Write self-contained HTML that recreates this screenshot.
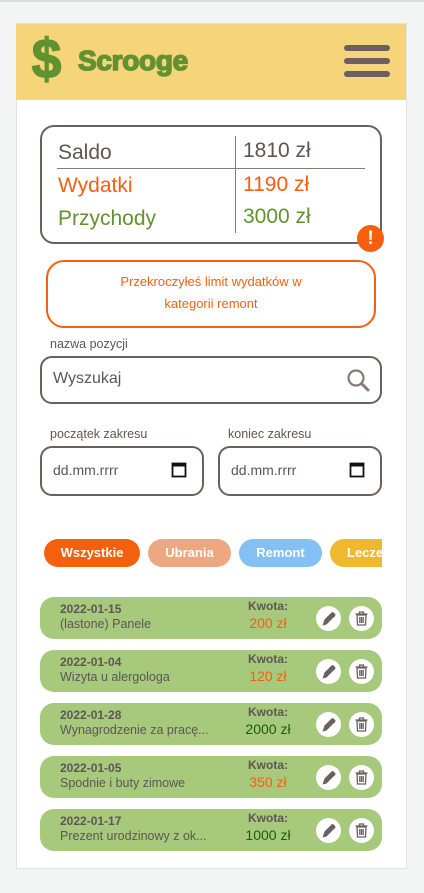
<!DOCTYPE html>
<html><head><meta charset="utf-8"><style>
*{margin:0;padding:0;box-sizing:border-box}
body{width:424px;height:893px;background:#f3f5f5;font-family:"Liberation Sans","DejaVu Sans",sans-serif;position:relative;overflow:hidden;color:#5f5555}
.a{position:absolute}
#top{left:0;top:0;width:424px;height:2px;background:#dcdde0}
#card{left:16px;top:23px;width:391px;height:846px;background:#fff;border:1px solid #e2e3e5}
#hdr{left:16px;top:24px;width:390px;height:76px;background:#f6d57a}
.bar{left:344px;width:46px;height:6px;border-radius:3px;background:#6b5f5f}
#box{left:40px;top:125px;width:342px;height:119px;border:2px solid #6b5f5f;border-radius:14px}
.t{font-size:21px}
.lab{font-size:12.5px;color:#5f5555}
.inp{border:2px solid #6b5f5f;border-radius:12px;background:#fff}
.pill{top:539px;height:28px;border-radius:14px;color:#fff;font-size:13px;text-align:center;line-height:28px;font-weight:bold}
.it{left:40px;width:342px;height:42px;background:#a6c97c;border-radius:14px}
.d{left:20px;top:5px;font-size:12px;font-weight:bold;color:#5f5555}
.n{left:20px;top:20px;font-size:12.5px;color:#5f5555;white-space:nowrap}
.k{left:205px;width:46px;text-align:center;top:2px;font-size:12px;font-weight:bold;color:#5f5555}
.v{left:195px;width:66px;text-align:center;top:18px;font-size:14px}
.g{color:#1d5a12}
.c{top:9px;width:25px;height:25px;border-radius:50%;background:#fff}
</style></head><body>
<div class="a" id="top"></div>
<div class="a" id="card"></div>
<div class="a" id="hdr"></div>
<div class="a" style="left:31px;top:29px;font-size:56px;font-weight:bold;color:#629230;line-height:60px;-webkit-text-stroke:1.5px #629230;transform:scaleX(0.95)">$</div>
<div class="a" style="left:78px;top:45px;font-size:28px;font-weight:bold;color:#629230;letter-spacing:-0.3px;-webkit-text-stroke:1.5px #629230">Scrooge</div>
<div class="a bar" style="top:45px"></div>
<div class="a bar" style="top:58px"></div>
<div class="a bar" style="top:71px"></div>

<div class="a" id="box"></div>
<div class="a" style="left:235px;top:136px;width:1px;height:97px;background:#857b7b"></div>
<div class="a" style="left:57px;top:168px;width:308px;height:1px;background:#857b7b"></div>
<div class="a t" style="left:58px;top:141px;color:#5f5555">Saldo</div>
<div class="a t" style="left:243px;top:139px;color:#5f5555">1810 zł</div>
<div class="a t" style="left:58px;top:174px;color:#f55f0e">Wydatki</div>
<div class="a t" style="left:243px;top:173px;color:#f55f0e">1190 zł</div>
<div class="a t" style="left:58px;top:207px;color:#629230">Przychody</div>
<div class="a t" style="left:243px;top:205px;color:#629230">3000 zł</div>
<div class="a" style="left:357px;top:225px;width:27px;height:27px;border-radius:50%;background:#f55f0e;color:#fff;font-weight:bold;font-size:19px;text-align:center;line-height:27px">!</div>

<div class="a" style="left:46px;top:260px;width:330px;height:68px;border:2.5px solid #f5600f;border-radius:18px;color:#f5600f;font-size:13px;text-align:center;line-height:22px;padding-top:9px">Przekroczyłeś limit wydatków w<br>kategorii remont</div>

<div class="a lab" style="left:50px;top:337px">nazwa pozycji</div>
<div class="a inp" style="left:40px;top:356px;width:342px;height:48px"></div>
<div class="a" style="left:53px;top:370px;font-size:16px;color:#5f5555">Wyszukaj</div>
<svg class="a" style="left:346px;top:368px" width="26" height="26" viewBox="0 0 26 26"><circle cx="10" cy="10" r="7.5" fill="none" stroke="#857b7b" stroke-width="2.2"/><path d="M15.5 15.5L22 22" stroke="#857b7b" stroke-width="3" stroke-linecap="round"/></svg>

<div class="a lab" style="left:50px;top:427px">początek zakresu</div>
<div class="a lab" style="left:228px;top:427px">koniec zakresu</div>
<div class="a inp" style="left:40px;top:446px;width:164px;height:50px"></div>
<div class="a inp" style="left:218px;top:446px;width:164px;height:50px"></div>
<div class="a" style="left:53px;top:462px;font-size:14px;color:#5f5555">dd.mm.rrrr</div>
<div class="a" style="left:231px;top:462px;font-size:14px;color:#5f5555">dd.mm.rrrr</div>
<svg class="a" style="left:171px;top:461px" width="16" height="17" viewBox="0 0 16 17"><rect x="1.5" y="2.5" width="13" height="13" fill="none" stroke="#111" stroke-width="1.8"/><rect x="1.5" y="2.5" width="13" height="3" fill="#111"/></svg>
<svg class="a" style="left:349px;top:461px" width="16" height="17" viewBox="0 0 16 17"><rect x="1.5" y="2.5" width="13" height="13" fill="none" stroke="#111" stroke-width="1.8"/><rect x="1.5" y="2.5" width="13" height="3" fill="#111"/></svg>

<div class="a pill" style="left:44px;width:96px;background:#f5600f">Wszystkie</div>
<div class="a pill" style="left:148px;width:83px;background:#eda882">Ubrania</div>
<div class="a pill" style="left:239px;width:83px;background:#85c0f4">Remont</div>
<div class="a" style="left:330px;top:539px;width:52px;height:28px;overflow:hidden"><div class="a pill" style="left:0;top:0;width:90px;background:#efb82e;text-align:left;padding-left:17px">Leczenie</div></div>

<div class="a it" style="top:597px"><div class="a d">2022-01-15</div><div class="a n">(lastone) Panele</div><div class="a k">Kwota:</div><div class="a v" style="color:#f55f0e">200 zł</div><div class="a c" style="left:276px"></div><div class="a c" style="left:309px"></div></div>
<div class="a it" style="top:650px"><div class="a d">2022-01-04</div><div class="a n">Wizyta u alergologa</div><div class="a k">Kwota:</div><div class="a v" style="color:#f55f0e">120 zł</div><div class="a c" style="left:276px"></div><div class="a c" style="left:309px"></div></div>
<div class="a it" style="top:703px"><div class="a d">2022-01-28</div><div class="a n">Wynagrodzenie za pracę...</div><div class="a k">Kwota:</div><div class="a v g">2000 zł</div><div class="a c" style="left:276px"></div><div class="a c" style="left:309px"></div></div>
<div class="a it" style="top:756px"><div class="a d">2022-01-05</div><div class="a n">Spodnie i buty zimowe</div><div class="a k">Kwota:</div><div class="a v" style="color:#f55f0e">350 zł</div><div class="a c" style="left:276px"></div><div class="a c" style="left:309px"></div></div>
<div class="a it" style="top:809px"><div class="a d">2022-01-17</div><div class="a n">Prezent urodzinowy z ok...</div><div class="a k">Kwota:</div><div class="a v g">1000 zł</div><div class="a c" style="left:276px"></div><div class="a c" style="left:309px"></div></div>

<svg class="a" style="left:0;top:0" width="424" height="893">
<defs>
<g id="pen"><path d="M-6 7L-4 1L3 -6Q5 -7 6 -5L7 -4Q7 -2 5 -1L-2 6Z" fill="#6b5f5f"/></g>
<g id="bin" fill="none" stroke="#6b5f5f" stroke-width="1.3"><path d="M-6 -4.5H6M-2 -4.5V-6.5H2V-4.5"/><path d="M-4.5 -3.5L-4 6.5H4L4.5 -3.5Z"/><path d="M-1.7 -1.5V4.5M0 -1.5V4.5M1.7 -1.5V4.5"/></g>
</defs>
<use href="#pen" x="328.5" y="618.5"/><use href="#bin" x="361.5" y="618.5"/>
<use href="#pen" x="328.5" y="671.5"/><use href="#bin" x="361.5" y="671.5"/>
<use href="#pen" x="328.5" y="724.5"/><use href="#bin" x="361.5" y="724.5"/>
<use href="#pen" x="328.5" y="777.5"/><use href="#bin" x="361.5" y="777.5"/>
<use href="#pen" x="328.5" y="830.5"/><use href="#bin" x="361.5" y="830.5"/>
</svg>
</body></html>
